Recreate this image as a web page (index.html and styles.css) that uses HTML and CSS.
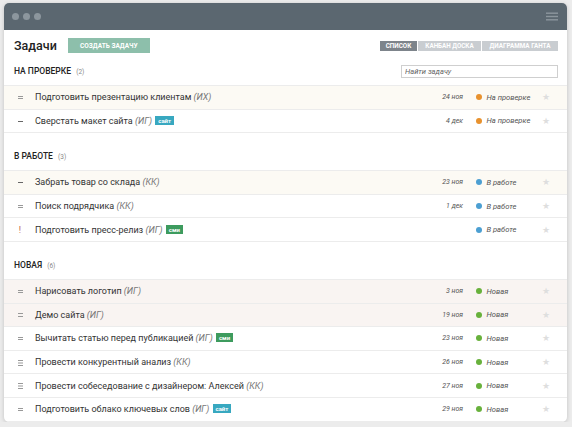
FILE: index.html
```html
<!DOCTYPE html>
<html lang="ru">
<head>
    <meta charset="UTF-8">
    <meta name="viewport" content="width=device-width, initial-scale=1.0">
    <title>Задачи</title>
    <link rel="stylesheet" href="styles.css">
</head>
<body>
    <div class="window">
        <div class="titlebar">
            <div class="dots"><span></span><span></span><span></span></div>
            <svg class="menu" width="12" height="9" viewBox="0 0 12 9">
                <rect x="0" y="0.5" width="12" height="1.4" fill="#8c969d"/>
                <rect x="0" y="3.8" width="12" height="1.4" fill="#8c969d"/>
                <rect x="0" y="7.1" width="12" height="1.4" fill="#8c969d"/>
            </svg>
        </div>

        <div class="toolbar">
            <h1>Задачи</h1>
            <button class="create">Создать задачу</button>
            <ul class="views">
                <li class="active">Список</li>
                <li>Канбан доска</li>
                <li>Диаграмма Ганта</li>
            </ul>
        </div>

        <!-- На проверке -->
        <div class="section-head first">
            <h2>На проверке <span class="count">(2)</span></h2>
            <input class="search" type="text" placeholder="Найти задачу">
        </div>
        <div class="list">
            <div class="row hl-yellow">
                <span class="prio p-eq"></span>
                <span class="title">Подготовить презентацию клиентам <i>(ИХ)</i></span>
                <span class="date">24 ноя</span>
                <span class="status"><b class="dot orange"></b>На проверке</span>
                <span class="star">★</span>
            </div>
            <div class="row">
                <span class="prio p-dash"></span>
                <span class="title">Сверстать макет сайта <i>(ИГ)</i> <em class="tag site">сайт</em></span>
                <span class="date">4 дек</span>
                <span class="status"><b class="dot orange"></b>На проверке</span>
                <span class="star">★</span>
            </div>
        </div>

        <!-- В работе -->
        <div class="section-head">
            <h2>В работе <span class="count">(3)</span></h2>
        </div>
        <div class="list">
            <div class="row hl-yellow">
                <span class="prio p-dash"></span>
                <span class="title">Забрать товар со склада <i>(КК)</i></span>
                <span class="date">23 ноя</span>
                <span class="status"><b class="dot blue"></b>В работе</span>
                <span class="star">★</span>
            </div>
            <div class="row">
                <span class="prio p-eq"></span>
                <span class="title">Поиск подрядчика <i>(КК)</i></span>
                <span class="date">1 дек</span>
                <span class="status"><b class="dot blue"></b>В работе</span>
                <span class="star">★</span>
            </div>
            <div class="row">
                <span class="prio p-high">!</span>
                <span class="title">Подготовить пресс-релиз <i>(ИГ)</i> <em class="tag smi">сми</em></span>
                <span class="date"></span>
                <span class="status"><b class="dot blue"></b>В работе</span>
                <span class="star">★</span>
            </div>
        </div>

        <!-- Новая -->
        <div class="section-head">
            <h2>Новая <span class="count">(6)</span></h2>
        </div>
        <div class="list">
            <div class="row hl-pink">
                <span class="prio p-eq"></span>
                <span class="title">Нарисовать логотип <i>(ИГ)</i></span>
                <span class="date">3 ноя</span>
                <span class="status"><b class="dot green"></b>Новая</span>
                <span class="star">★</span>
            </div>
            <div class="row hl-pink">
                <span class="prio p-eq"></span>
                <span class="title">Демо сайта <i>(ИГ)</i></span>
                <span class="date">19 ноя</span>
                <span class="status"><b class="dot green"></b>Новая</span>
                <span class="star">★</span>
            </div>
            <div class="row">
                <span class="prio p-eq"></span>
                <span class="title">Вычитать статью перед публикацией <i>(ИГ)</i> <em class="tag smi">сми</em></span>
                <span class="date">23 ноя</span>
                <span class="status"><b class="dot green"></b>Новая</span>
                <span class="star">★</span>
            </div>
            <div class="row">
                <span class="prio p-tri"></span>
                <span class="title">Провести конкурентный анализ <i>(КК)</i></span>
                <span class="date">26 ноя</span>
                <span class="status"><b class="dot green"></b>Новая</span>
                <span class="star">★</span>
            </div>
            <div class="row">
                <span class="prio p-tri"></span>
                <span class="title">Провести собеседование с дизайнером: Алексей <i>(КК)</i></span>
                <span class="date">27 ноя</span>
                <span class="status"><b class="dot green"></b>Новая</span>
                <span class="star">★</span>
            </div>
            <div class="row">
                <span class="prio p-eq"></span>
                <span class="title">Подготовить облако ключевых слов <i>(ИГ)</i> <em class="tag site">сайт</em></span>
                <span class="date">29 ноя</span>
                <span class="status"><b class="dot green"></b>Новая</span>
                <span class="star">★</span>
            </div>
        </div>
    </div>
</body>
</html>
```

FILE: styles.css
```css
* {
    margin: 0;
    padding: 0;
    box-sizing: border-box;
    font-family: Roboto, 'Liberation Sans', sans-serif;
}
body {
    background-color: #ececec;
    padding: 3px 5px 0 4px;
    color: #333;
}
.window {
    background-color: white;
    border-radius: 5px;
    overflow: hidden;
    height: 419px;
    box-shadow: 0 1px 4px rgba(0, 0, 0, 0.18);
}
.titlebar {
    height: 27px;
    background-color: #5b6770;
    display: flex;
    align-items: center;
    justify-content: space-between;
    padding: 0 9px 0 8px;
}
.dots {
    display: flex;
    gap: 4px;
}
.dots span {
    width: 7px;
    height: 7px;
    border-radius: 50%;
    background-color: #8c969d;
}
.menu {
    display: block;
}
.toolbar {
    display: flex;
    align-items: center;
    height: 15px;
    margin: 8px 9px 0 10px;
}
.toolbar h1 {
    font-size: 12.5px;
    font-weight: 500;
    color: #222;
    margin-right: 11px;
}
.create {
    height: 15px;
    width: 82px;
    background-color: #8dbfab;
    color: white;
    border: none;
    font-size: 6.5px;
    font-weight: 700;
    text-transform: uppercase;
}
.views {
    display: flex;
    list-style: none;
    margin-left: auto;
    gap: 1px;
}
.views li {
    height: 10px;
    line-height: 10px;
    padding: 0 5px;
    background-color: #c9cdd1;
    color: white;
    font-size: 6.3px;
    font-weight: 700;
    text-transform: uppercase;
}
.views li:nth-child(2) {
    width: 63px;
    text-align: center;
}
.views li:nth-child(3) {
    width: 76px;
    text-align: center;
}
.views li.active {
    background-color: #7d848b;
    width: 37px;
    text-align: center;
}
.section-head {
    display: flex;
    align-items: center;
    height: 37px;
    padding: 17px 9px 8px 10px;
}
.section-head.first {
    height: 32px;
    padding-top: 12px;
}
.section-head h2 {
    font-size: 8.5px;
    font-weight: 500;
    text-transform: uppercase;
    color: #222;
}
.count {
    font-size: 6.5px;
    font-weight: 400;
    color: #888;
    margin-left: 3px;
}
.search {
    margin-left: auto;
    width: 157px;
    height: 13px;
    border: 1px solid #cfcfcf;
    padding: 0 3px;
    font-size: 7.5px;
    font-style: italic;
    color: #666;
    outline: none;
}
.search::placeholder {
    color: #666;
}
.list {
    border-top: 1px solid #ececec;
}
.row {
    display: flex;
    align-items: center;
    height: 23.6px;
    border-bottom: 1px solid #ececec;
    padding: 0 17px 0 10px;
}
.hl-yellow {
    background-color: #fcfaf4;
}
.hl-pink {
    background-color: #f9f4f2;
}
.prio {
    width: 12px;
    height: 8px;
    margin-right: 9px;
    position: relative;
}
.p-eq::before, .p-eq::after, .p-tri::before, .p-tri::after, .p-dash::before {
    content: "";
    position: absolute;
    left: 3.5px;
    width: 5px;
    height: 1px;
    background-color: #999;
}
.p-eq::before { top: 2.5px; }
.p-eq::after { top: 5px; }
.p-dash::before {
    top: 4px;
    background-color: #666;
}
.p-tri::before {
    top: 1.5px;
    box-shadow: 0 2.5px 0 #999;
}
.p-tri::after { top: 6.5px; }
.p-high {
    font-size: 9px;
    line-height: 8px;
    font-weight: 400;
    color: #c2654c;
    text-align: center;
}
.title {
    flex: 1;
    font-size: 9px;
    color: #333;
    white-space: nowrap;
}
.title i {
    color: #777;
}
.tag {
    display: inline-block;
    font-style: normal;
    font-size: 6px;
    font-weight: 700;
    color: white;
    height: 9px;
    line-height: 9px;
    padding: 0 3px;
    vertical-align: 1px;
    margin-left: 1px;
}
.tag.site {
    background-color: #38a8c0;
}
.tag.smi {
    background-color: #3d9b5e;
}
.date {
    width: 50px;
    margin-right: 13px;
    text-align: right;
    font-size: 7px;
    font-style: italic;
    color: #555;
}
.status {
    width: 66px;
    display: flex;
    align-items: center;
    font-size: 7.6px;
    font-style: italic;
    color: #555;
}
.dot {
    width: 6px;
    height: 6px;
    border-radius: 50%;
    margin-left: -0.5px;
    margin-right: 5px;
}
.dot.orange { background-color: #e8922e; }
.dot.blue { background-color: #4c9fd2; }
.dot.green { background-color: #68b13c; }
.star {
    width: 8px;
    font-size: 9px;
    color: #dedede;
    text-align: center;
}
```
